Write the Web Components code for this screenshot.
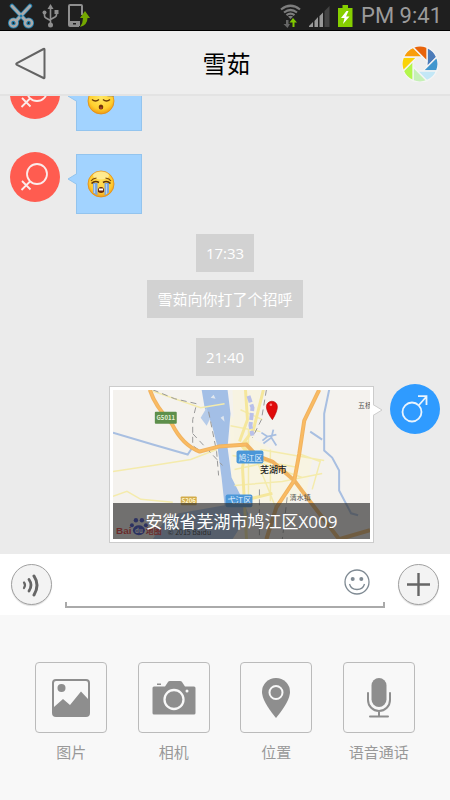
<!DOCTYPE html>
<html lang="zh-CN">
<head>
<meta charset="utf-8">
<meta name="viewport" content="width=device-width, initial-scale=1">
<title>雪茹</title>
<style>
  body { margin: 0; font-family: "Open Sans", "Noto Sans CJK SC", sans-serif; }
</style>
</head>
<body>
<chat-app></chat-app>

<template id="chat-app">
  <style>
    :host { display: flex; flex-direction: column; height: 100vh; background: #ebebeb; overflow: hidden; }
    chat-log { flex: 1; min-height: 0; }
  </style>
  <status-bar>PM 9:41</status-bar>
  <chat-header>雪茹</chat-header>
  <chat-log>
    <chat-message gender="female"><emoji-face kind="sleepy"></emoji-face></chat-message>
    <chat-message gender="female"><emoji-face kind="crying"></emoji-face></chat-message>
    <chat-note>17:33</chat-note>
    <chat-note follow>雪茹向你打了个招呼</chat-note>
    <chat-note>21:40</chat-note>
    <chat-message gender="male" own><map-card>安徽省芜湖市鸠江区X009</map-card></chat-message>
  </chat-log>
  <message-bar></message-bar>
  <tool-panel>
    <tool-tile icon="picture">图片</tool-tile>
    <tool-tile icon="camera">相机</tool-tile>
    <tool-tile icon="place">位置</tool-tile>
    <tool-tile icon="voice">语音通话</tool-tile>
  </tool-panel>
</template>

<template id="status-bar">
  <style>
    :host { display: flex; align-items: center; justify-content: space-between; box-sizing: border-box; height: 31px; flex: none;
      padding: 2px 8px 0; background: #1f1f1f; border-bottom: 1px solid #000; color: #9b9b9b; font: 22px/28px Roboto, sans-serif; }
    div { display: flex; align-items: center; gap: 8px; }
    svg { display: block; }
  </style>
  <div>
    <svg width="26" height="26" viewBox="0 0 26 26" fill="none" aria-hidden="true">
      <g stroke="#1b7bab" stroke-width="4.500" stroke-linecap="round"><path d="M4 3L18 18M22 3L8 18"/><circle cx="5.500" cy="20" r="3.300"/><circle cx="20.500" cy="20" r="3.300"/></g>
      <g stroke="#aaa" stroke-width="2.800" stroke-linecap="round"><path d="M4 3L18 18M22 3L8 18"/><circle cx="5.500" cy="20" r="3.500" stroke-width="2.500"/><circle cx="20.500" cy="20" r="3.500" stroke-width="2.500"/></g>
      <circle cx="13" cy="13" r="1.500" fill="#1b7bab"/>
    </svg>
    <svg width="17" height="24" viewBox="0 0 17 24" fill="none" stroke="#8f8f8f" stroke-width="1.600" aria-hidden="true">
      <path d="M8.500 4V20M2.500 8V12Q2.500 13 4 14L8.500 16.500M14.500 8V11Q14.500 12 13 13L8.500 15.500"/>
      <path d="M5.500 5L8.500 0L11.500 5Z" fill="#8f8f8f" stroke="none"/><circle cx="8.500" cy="21" r="2.500" fill="#8f8f8f" stroke="none"/>
      <circle cx="2.500" cy="8.500" r="2" fill="#8f8f8f" stroke="none"/><path d="M12.500 6h4v4h-4z" fill="#8f8f8f" stroke="none"/>
    </svg>
    <svg width="24" height="24" viewBox="0 0 24 24" aria-hidden="true">
      <path d="M2 2Q2 1 3 1H14Q15 1 15 2V11M2 2V21Q2 22 3 22H12" fill="none" stroke="#8f8f8f" stroke-width="2"/>
      <path d="M2 17H13V22H2Z" fill="#8f8f8f"/><path d="M6 19h3v1.500h-3z" fill="#1f1f1f"/>
      <path d="M18 7L23 14H20.500Q20.500 21 13 23Q16 19 16 14H13Z" fill="#74a800"/>
    </svg>
  </div>
  <div>
    <svg width="21" height="24" viewBox="0 0 21 24" fill="none" stroke="#7d7d7d" stroke-width="2.200" aria-hidden="true">
      <path d="M1 5.500Q10.500 -2 20 5.500M4 8.500Q10.500 3.500 17 8.500M6.500 11.200Q10.500 8 14.500 11.200"/>
      <path d="M8 12.500Q10.500 11 13 12.500L10.500 15Z" fill="#7d7d7d" stroke="none"/>
      <path d="M6 16V20H3.500L7.500 24L10 20H8.500V16Z" fill="#666" stroke="none"/><path d="M12.500 23V18.500H9.500L13 14L17 18.500H14.500V23Z" fill="#80c800" stroke="none"/>
    </svg>
    <svg width="21" height="21" viewBox="0 0 21 21" aria-hidden="true">
      <path d="M0 21V20L4 16V21ZM5.500 21V15L9 11V21ZM10.500 21V10L14 6.500V21Z" fill="#999"/><path d="M15.500 21V5L20.500 0V21Z" fill="#444"/>
    </svg>
    <svg width="15" height="22" viewBox="0 0 15 22" aria-hidden="true">
      <path d="M0 3H4.500V0H10V3H14.500V22H0Z" fill="#86cf00"/><path d="M8.500 6L3 13H6.500L5 19L11.500 11.500H8L10.500 6Z" fill="#fff"/>
    </svg>
    <slot></slot>
  </div>
</template>

<template id="chat-header">
  <style>
    :host { display: grid; grid-template-columns: 1fr auto 1fr; align-items: center; box-sizing: border-box; height: 65px; flex: none;
      padding: 2px 12px 0 15px; background: #eee; border-bottom: 2px solid #e3e3e3; }
    h1 { margin: 0; font-size: 24px; line-height: 32px; font-weight: 400; color: #000; }
    button { border: 0; padding: 0; background: none; cursor: pointer; }
    .back { justify-self: start; }
    .album { justify-self: end; }
    svg { display: block; }
  </style>
  <button class="back" type="button" aria-label="返回">
    <svg width="32" height="36" viewBox="0 0 32 36"><path d="M29.500 3.500V31.500Q29.500 32.500 28.500 32L2 18.800Q0.500 18 2 17.200L28.500 3Q29.500 2.500 29.500 3.500Z" fill="none" stroke="#636363" stroke-width="2"/></svg>
  </button>
  <h1><slot></slot></h1>
  <button class="album" type="button" aria-label="相册">
    <svg width="36" height="36" viewBox="-18 -18 36 36">
      <defs><path id="b" d="M7 -16.600A18 18 0 0 1 16.700 -6.800L7 2.900Z" stroke="#f4f4f4" stroke-width="1.300"/></defs>
      <use href="#b" fill="#4c7cb9"/>
      <use href="#b" fill="#4096ce" transform="rotate(45)"/>
      <use href="#b" fill="#c3e7f6" transform="rotate(90)"/>
      <use href="#b" fill="#c6f0b6" transform="rotate(135)"/>
      <use href="#b" fill="#b3f64c" transform="rotate(180)"/>
      <use href="#b" fill="#f9d307" transform="rotate(225)"/>
      <use href="#b" fill="#f99d0c" transform="rotate(270)"/>
      <use href="#b" fill="#e8630a" transform="rotate(315)"/>
    </svg>
  </button>
</template>

<template id="chat-log">
  <style>
    :host { display: flex; flex-direction: column; justify-content: flex-end; overflow: hidden; padding: 0 10px 11px; background: #ebebeb; }
    ::slotted(*) { flex: none; }
    ::slotted(chat-message) { margin-top: 21px; }
    ::slotted(chat-message[own]) { margin-top: 8px; }
    ::slotted(chat-note) { margin-top: 20px; align-self: center; }
    ::slotted(chat-note[follow]) { margin-top: 8px; }
  </style>
  <slot></slot>
</template>

<template id="chat-note">
  <style>
    :host { display: block; padding: 8px 10px; background: #d2d2d2; color: #fff; font-size: 15px; line-height: 22px; }
  </style>
  <slot></slot>
</template>

<template id="chat-message">
  <style>
    :host { display: flex; align-items: flex-start; gap: 16px; }
    :host([own]) { flex-direction: row-reverse; }
    .avatar { flex: none; width: 50px; height: 50px; border-radius: 50%; background: #ff5c50; }
    :host([gender="male"]) .avatar { background: #2f9bff; }
    .avatar svg { display: none; }
    :host([gender="female"]) .f, :host([gender="male"]) .m { display: block; }
    .bubble { position: relative; box-sizing: border-box; margin-top: 2px; min-height: 60px; min-width: 66px; display: flex; align-items: center;
      padding: 0 10px; background: #a2d3ff; border: 1px solid #93c4ee; }
    :host([own]) .bubble { padding: 3px; background: #fff; border-color: #ccc; }
    .tail { position: absolute; top: 17px; right: 100%; width: 10px; height: 14px; fill: #a2d3ff; stroke: #93c4ee; }
    :host([own]) .tail { right: auto; left: 100%; top: 16px; transform: scaleX(-1); fill: #fff; stroke: #ccc; }
  </style>
  <div class="avatar">
    <svg class="f" viewBox="0 0 50 50" fill="none" stroke="#fbeceb" stroke-width="1.800"><circle cx="27" cy="22" r="10"/><path d="M20 29.500L11.500 38M12 29L20.500 37.500"/></svg>
    <svg class="m" viewBox="0 0 50 50" fill="none" stroke="#eaf4fd" stroke-width="1.800"><circle cx="22" cy="28" r="9.500"/><path d="M29 21L36.500 12.500M28 12.200H36.500V21"/></svg>
  </div>
  <div class="bubble">
    <slot></slot>
    <svg class="tail" viewBox="0 0 10 14" overflow="visible" aria-hidden="true"><path d="M11 1.500V12.500H10L1 7L10 1.500Z" stroke="none"/><path d="M10 1.500L1 7L10 12.500" fill="none"/></svg>
  </div>
</template>

<template id="emoji-face">
  <style>
    :host { display: block; width: 28px; height: 28px; }
    svg { display: none; width: 28px; height: 28px; }
    :host([kind="sleepy"]) .sleepy, :host([kind="crying"]) .crying { display: block; }
  </style>
  <svg class="sleepy" viewBox="0 0 28 28" role="img" aria-label="困">
    <defs><radialGradient id="g" cx=".5" cy=".35" r=".65"><stop offset="0" stop-color="#ffe866"/><stop offset=".7" stop-color="#ffcf2e"/><stop offset="1" stop-color="#f09a12"/></radialGradient></defs>
    <circle cx="14" cy="14" r="13" fill="url(#g)" stroke="#e28c14" stroke-width=".8"/>
    <path d="M5 12.500Q8.500 15.500 12 12.500M16 12.500Q19.500 15.500 23 12.500" fill="none" stroke="#6b3c08" stroke-width="1.500"/>
    <ellipse cx="14" cy="20" rx="2.300" ry="2.500" fill="#70340a"/><path d="M12.800 20.500h2.400v1h-2.400z" fill="#c44"/>
    <path d="M21 4h5l-4 4.500h5" fill="none" stroke="#4a5890" stroke-width="1.500"/>
  </svg>
  <svg class="crying" viewBox="0 0 28 28" role="img" aria-label="大哭">
    <defs><radialGradient id="h" cx=".5" cy=".4" r=".62"><stop offset="0" stop-color="#ffdf58"/><stop offset=".7" stop-color="#ffcb32"/><stop offset="1" stop-color="#ee9614"/></radialGradient></defs>
    <circle cx="14" cy="14" r="13" fill="url(#h)" stroke="#e28c14" stroke-width=".8"/>
    <ellipse cx="14" cy="5.500" rx="8" ry="4" fill="#fff3b0" opacity=".7"/>
    <path d="M6 13H10.500V25.500Q8 24.500 6 22.500ZM17.500 13H22V22.500Q20 24.500 17.500 25.500Z" fill="#7aa5de"/>
    <path d="M7.500 14V23M19.500 14V24" stroke="#b5d3f4" stroke-width="1.200"/>
    <path d="M4.500 13.500Q8 10 12 12.500M16 12.500Q20 10 23.500 13.500" fill="none" stroke="#5e3408" stroke-width="1.600"/>
    <path d="M4 11Q5.500 8.500 9.500 8M24 11Q22.500 8.500 18.500 8" fill="none" stroke="#7a480c" stroke-width="1.100"/>
    <path d="M11 22Q10.500 17 14 17T17 22Q14 24 11 22Z" fill="#6b2a0c"/><path d="M12 18.500h4v2h-4z" fill="#fff"/>
  </svg>
</template>

<template id="map-card">
  <style>
    :host { display: block; position: relative; width: 257px; overflow: hidden; }
    svg { display: block; width: 100%; height: 149px; }
    p { position: absolute; left: 0; right: 0; bottom: 0; margin: 0; padding: 7px 0 5px; background: rgba(50, 50, 50, .68); color: #fff;
      font-size: 17px; line-height: 24px; text-align: center; white-space: nowrap; }
  </style>
  <svg viewBox="0 0 258 150" preserveAspectRatio="xMidYMid slice" font-family="Noto Sans CJK SC, sans-serif" fill="none" aria-label="地图" role="img">
    <path d="M0 0H258V150H0Z" fill="#f4f2ee"/>
    <path d="M117 24L135 46L160 60L200 70L194 104L160 122L135 118L119 88Z" fill="#f8f4e2"/>
    <path d="M120 0H148L140 60H122Z" fill="#f7f3e2"/>
    <path d="M89 0H115L118 24L115 58L119 88L129 108L136 125L120 150H40L50 134L66 124L112 116L109 88L105 58L99 34L92 18Z" fill="#a3bfe6"/>
    <path d="M94 18L88 28L94 36L97 30" fill="#b5cbe9"/>
    <path d="M98 8L101 5L103 9ZM108 28L111 26L112 32Z" fill="#dfe6ee"/>
    <g stroke="#f4ebac" stroke-width="1.500">
      <path d="M0 82L40 76L78 70L104 60M0 107L14 102L28 110L60 113M36 0L88 18L112 14M118 36L148 42M148 60L212 71M122 80L150 74L190 88M122 96L170 92L210 84M136 40V110M158 60V112M186 64L208 72L200 100M128 20L150 30M140 60L164 120M120 66L186 78"/>
    </g>
    <g stroke="#f5e79c" stroke-width="3"><path d="M133 0L135 30L127 52M135 52L130 78L134 150M151 0L141 40L129 56L137 66M127 112L160 104"/></g>
    <g stroke="#999" stroke-width="1" stroke-dasharray="6 4"><path d="M40 0L62 9L84 14L80 30V56L87 61M96 22L104 62L106 86M154 0L149 30L140 48"/><path d="M80 44L110 76M147 100V150M176 98L170 150"/></g>
    <g stroke="#a8bfe1" stroke-width="2">
      <path d="M0 43L40 55L75 65L79 59"/><path d="M217 0L212 24V61L220 68L227 81V101L239 124L246 126M198 42L210 50"/>
      <path d="M149 43L155 47L164 45M161 40L159 48L164 56M159 48L151 54M155 47L150 51" stroke-width="1.800"/>
      <path d="M136 6L140 18L138 36L140 46" stroke="#b9c0ea" stroke-width="4" stroke-dasharray="7 2"/>
    </g>
    <g stroke="#f0b360" stroke-width="4" stroke-linejoin="round">
      <path d="M37 0Q42 16 59 34Q70 56 87 62L106 57L134 55L144 66L160 72L182 91L197 111L227 150M207 0L192 31L187 64L182 91L164 118L154 150M227 150L258 141"/>
    </g>
    <g stroke="#fabb62" stroke-width="2"><path d="M37 0Q42 16 59 34Q70 56 87 62L106 57L134 55M207 0L192 31L187 64L182 91L164 118"/></g>
    <rect x="42" y="22" width="22" height="12" rx="1" fill="#5d8f4b"/><text x="53" y="30" font-size="6" font-weight="700" text-anchor="middle" fill="#e5f0d8">G5011</text>
    <rect x="68" y="107" width="16" height="9" rx="1" fill="#d2ab49"/><text x="76" y="114" font-size="6" font-weight="700" text-anchor="middle" fill="#fff6cf">S206</text>
    <rect x="124" y="61" width="27" height="13" rx="2" fill="#4b97d8"/><text x="138" y="71" font-size="8" text-anchor="middle" fill="#e6f4ff">鸠江区</text>
    <rect x="113" y="105" width="27" height="13" rx="2" fill="#4b97d8"/><text x="127" y="114" font-size="8" text-anchor="middle" fill="#e6f4ff">弋江区</text>
    <text x="161" y="84" font-size="9" font-weight="500" text-anchor="middle" fill="#222">芜湖市</text>
    <text x="188" y="111" font-size="7" text-anchor="middle" fill="#555">清水镇</text>
    <text x="246" y="18" font-size="7" fill="#555">五杨</text>
    <path d="M160 30Q154 22 154 17A5.500 5.500 0 0 1 165 17Q165 22 160 30Z" fill="#e00b0b" stroke="#b50000" stroke-width=".6"/><circle cx="158.500" cy="15" r="1.300" fill="#ff7a7a"/>
    <text x="3" y="145" font-size="10" font-weight="700" fill="#e01b1b" font-family="Liberation Sans, sans-serif">Bai</text>
    <g fill="#2233c4"><ellipse cx="26" cy="141" rx="6" ry="5"/><circle cx="19" cy="136" r="2"/><circle cx="23" cy="131" r="2.200"/><circle cx="29" cy="131" r="2.200"/><circle cx="33" cy="136" r="2"/></g>
    <text x="26" y="144" font-size="6" font-weight="700" text-anchor="middle" fill="#fff">du</text>
    <text x="33" y="145" font-size="8" font-weight="700" fill="#e01b1b">地图</text>
    <text x="55" y="146" font-size="7" fill="#111">© 2015 Baidu</text>
  </svg>
  <p><slot></slot></p>
</template>

<template id="message-bar">
  <style>
    :host { display: flex; align-items: center; gap: 13px; flex: none; box-sizing: border-box; height: 61px; padding: 0 11px; background: #fff; }
    button { padding: 0; border: 0; background: none; cursor: pointer; }
    .round { flex: none; display: grid; place-items: center; box-sizing: border-box; width: 41px; height: 41px; border: 1px solid #a0a0a0; border-radius: 50%;
      background: #f3f3f3; box-shadow: 0 1px 1px #ddd; }
    .field { flex: 1; min-width: 0; display: flex; align-items: center; box-sizing: border-box; height: 44px; padding: 0 15px 0 6px; margin-top: 2px;
      background: linear-gradient(#aaa, #aaa) 0 100% / 100% 2px no-repeat, linear-gradient(#aaa, #aaa) 0 100% / 2px 6px no-repeat, linear-gradient(#aaa, #aaa) 100% 100% / 2px 6px no-repeat; }
    input { flex: 1; min-width: 0; border: 0; padding: 0; outline: 0; background: none; font: inherit; font-size: 17px; line-height: 24px; }
    .field button { padding-bottom: 8px; }
    svg { display: block; }
  </style>
  <button class="round" type="button" aria-label="语音">
    <svg width="24" height="24" viewBox="0 0 24 24" fill="none" stroke="#666" stroke-linecap="round"><path d="M4 9.500Q6 12 4 15" stroke-width="2.200"/><path d="M9 6.500Q13 12 9 18" stroke-width="2.800"/><path d="M14 3Q20 12 14 22" stroke-width="3"/></svg>
  </button>
  <div class="field">
    <input type="text" aria-label="消息">
    <button type="button" aria-label="表情">
      <svg width="26" height="26" viewBox="0 0 26 26" fill="none" stroke="#7f8a93" stroke-width="1.300"><circle cx="13" cy="13" r="12"/><path d="M5.500 15Q7 20.500 13 20.500T20.500 15"/><circle cx="8.700" cy="10" r="2" fill="#7f8a93" stroke="none"/><circle cx="17.300" cy="10" r="2" fill="#7f8a93" stroke="none"/></svg>
    </button>
  </div>
  <button class="round" type="button" aria-label="更多">
    <svg width="25" height="25" viewBox="0 0 25 25" stroke="#666" stroke-width="2.400"><path d="M1 12.500H24M12.500 1V24"/></svg>
  </button>
</template>

<template id="tool-panel">
  <style>
    :host { display: grid; grid-template-columns: repeat(4, 1fr); flex: none; padding: 47px 20px 37px; background: #f8f8f8; }
  </style>
  <slot></slot>
</template>

<template id="tool-tile">
  <style>
    :host { display: flex; justify-content: center; }
    button { display: flex; flex-direction: column; align-items: center; gap: 8px; padding: 0; border: 0; background: none; color: #999;
      font: inherit; font-size: 15px; line-height: 22px; cursor: pointer; }
    .frame { box-sizing: border-box; width: 72px; height: 71px; display: grid; place-items: center; border: 1px solid #bbb; border-radius: 4px; }
    svg { display: none; width: 44px; height: 44px; fill: #8e8e8e; }
    :host([icon="picture"]) .picture, :host([icon="camera"]) .camera, :host([icon="place"]) .place, :host([icon="voice"]) .voice { display: block; }
  </style>
  <button type="button">
    <span class="frame">
      <svg class="picture" viewBox="0 0 44 44"><path fill-rule="evenodd" d="M7 3H37Q41 3 41 7V37Q41 41 37 41H7Q3 41 3 37V7Q3 3 7 3ZM7 5Q5 5 5 7V31L14 23L21 29L32 15.500L39 23V7Q39 5 37 5Z"/><circle cx="12.500" cy="12" r="4"/></svg>
      <svg class="camera" viewBox="0 0 44 44"><path d="M2 10.500H13L16 6Q16.500 5 18 5H28Q29.500 5 30 6L33 10.500H42Q43.500 10.500 43.500 12V37Q43.500 38.500 42 38.500H2Q.5 38.500 .5 37V12Q.5 10.500 2 10.500ZM5 7.500H9V9H5Z"/><circle cx="22" cy="23.500" r="9.500" stroke="#f8f8f8" stroke-width="2.300"/><circle cx="35" cy="15" r="1.500" fill="#f8f8f8"/></svg>
      <svg class="place" viewBox="0 0 44 44"><path d="M22 42Q8 25 8 16A14 14 0 0 1 36 16Q36 25 22 42Z"/><circle cx="22" cy="16.500" r="6.500" stroke="#f8f8f8" stroke-width="2"/></svg>
      <svg class="voice" viewBox="0 0 44 44"><rect x="14.500" y="2" width="15" height="29" rx="7.500"/><path d="M11 17V24A11 11 0 0 0 33 24V17M22 35V40M13 40.500H31" fill="none" stroke="#8e8e8e" stroke-width="2" stroke-linecap="round"/></svg>
    </span>
    <slot></slot>
  </button>
</template>

<script>
  for (const template of document.querySelectorAll('template[id]')) {
    customElements.define(template.id, class extends HTMLElement {
      constructor() {
        super();
        this.attachShadow({ mode: 'open' }).append(template.content.cloneNode(true));
      }
    });
  }
</script>
</body>
</html>
